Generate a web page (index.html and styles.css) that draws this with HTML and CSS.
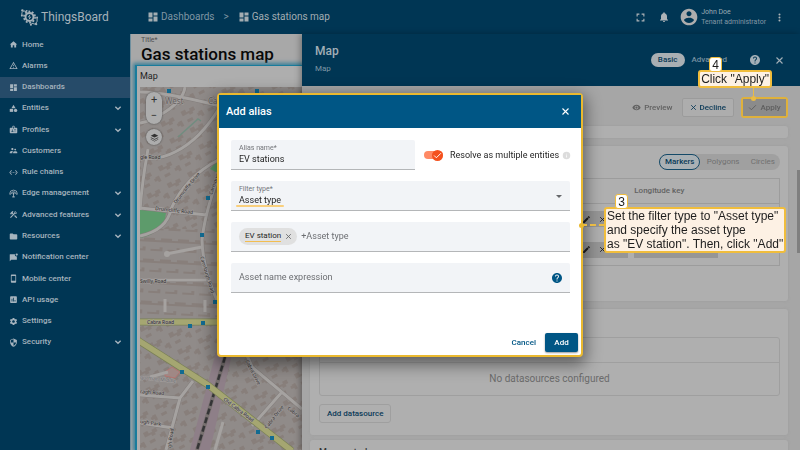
FILE: index.html
```
<!DOCTYPE html>
<html lang="en">
<head>
<meta charset="utf-8">
<title>ThingsBoard - Gas stations map</title>
<link rel="stylesheet" href="styles.css">
</head>
<body>
<svg class="sprite" aria-hidden="true">
  <symbol id="home" viewBox="0 0 24 24"><path d="M10 20v-6h4v6h5v-8h3L12 3 2 12h3v8z"/></symbol>
  <symbol id="alarm" viewBox="0 0 24 24"><path d="M12 2L1 21h22M12 6l7.53 13H4.47M11 10v4h2v-4m-2 6v2h2v-2"/></symbol>
  <symbol id="dash" viewBox="0 0 24 24"><path d="M3 13h8V3H3v10zm0 8h8v-6H3v6zm10 0h8V11h-8v10zm0-18v6h8V3h-8z"/></symbol>
  <symbol id="entities" viewBox="0 0 24 24"><path d="M12 2l-5.5 9h11z"/><circle cx="17.5" cy="17" r="4.5"/><path d="M2 13h9v8H2z"/></symbol>
  <symbol id="profiles" viewBox="0 0 24 24"><path d="M20 7h-5V4c0-1.100-.9-2-2-2h-2c-1.100 0-2 .9-2 2v3H4c-1.100 0-2 .9-2 2v11c0 1.100.9 2 2 2h16c1.100 0 2-.9 2-2V9c0-1.100-.9-2-2-2zM9 12c.83 0 1.500.67 1.500 1.500S9.830 15 9 15s-1.500-.67-1.500-1.500S8.170 12 9 12zm3 6H6v-.75c0-1 2-1.500 3-1.500s3 .5 3 1.500V18zm1-9h-2V4h2v5zm5 7.500h-4V15h4v1.500zm0-3h-4V12h4v1.500z"/></symbol>
  <symbol id="customers" viewBox="0 0 24 24"><path d="M16.500 12c1.380 0 2.490-1.120 2.490-2.500S17.880 7 16.500 7C15.120 7 14 8.120 14 9.500s1.120 2.500 2.500 2.500zM9 11c1.660 0 2.990-1.340 2.990-3S10.660 5 9 5C7.340 5 6 6.340 6 8s1.340 3 3 3zm7.500 3c-1.830 0-5.500.92-5.500 2.750V19h11v-2.250c0-1.830-3.670-2.750-5.500-2.750zM9 13c-2.330 0-7 1.170-7 3.500V19h7v-2.250c0-.85.33-2.340 2.370-3.470C10.500 13.100 9.660 13 9 13z"/></symbol>
  <symbol id="chains" viewBox="0 0 24 24"><path d="M7.770 6.760L6.230 5.480.82 12l5.410 6.520 1.540-1.280L3.420 12l4.350-5.240zM7 13h2v-2H7v2zm10-2h-2v2h2v-2zm-6 2h2v-2h-2v2zm6.770-7.520l-1.540 1.280L20.580 12l-4.350 5.240 1.540 1.280L23.180 12l-5.410-6.520z"/></symbol>
  <symbol id="edge" viewBox="0 0 24 24"><g fill="none" stroke="currentColor" stroke-width="2.200"><path d="M2 12a10 9 0 0 1 20 0M6 13a6 5.500 0 0 1 12 0M12 11v11M8 21h8"/></g><circle cx="12" cy="12" r="2.500"/><circle cx="3" cy="13" r="2"/><circle cx="21" cy="13" r="2"/></symbol>
  <symbol id="tools" viewBox="0 0 24 24"><path d="M13.800 15.700l2.100-2.100 6 6-2.100 2.100zM17.500 10a3.500 3.500 0 0 0 3.200-4.900l-2.700 2.700-1.500-1.500 2.700-2.700A3.500 3.500 0 0 0 14.300 7.900l-1.900 1.800-1.800-1.800.7-.7-1.400-1.400L12 3.700a3 3 0 0 0-4.200 0L4.200 7.200l1.400 1.400H2.800l-.7.7 3.500 3.600.7-.7V9.300l1.400 1.400.7-.7 1.800 1.800-7.400 7.400 2.100 2.100L16.200 9.800c.4.100.8.200 1.300.2z"/></symbol>
  <symbol id="folder" viewBox="0 0 24 24"><path d="M10 4H4c-1.100 0-2 .9-2 2v12c0 1.100.9 2 2 2h16c1.100 0 2-.9 2-2V8c0-1.100-.9-2-2-2h-8l-2-2z"/></symbol>
  <symbol id="notif" viewBox="0 0 24 24"><path d="M3 3h13a5 5 0 0 0 5 6v9H6l-4 4V4z"/><circle cx="20.500" cy="4" r="3"/></symbol>
  <symbol id="mobile" viewBox="0 0 24 24"><path d="M17 1H7c-1.100 0-2 .9-2 2v18c0 1.100.9 2 2 2h10c1.100 0 2-.9 2-2V3c0-1.100-.9-2-2-2zm0 17H7V5h10v13z"/></symbol>
  <symbol id="chart" viewBox="0 0 24 24"><path d="M19 3H5c-1.100 0-2 .9-2 2v14c0 1.100.9 2 2 2h14c1.100 0 2-.9 2-2V5c0-1.100-.9-2-2-2zM9 17H7v-7h2v7zm4 0h-2V7h2v10zm4 0h-2v-4h2v4z"/></symbol>
  <symbol id="gear" viewBox="0 0 24 24"><path d="M19.140 12.940c.04-.3.06-.61.06-.94 0-.32-.02-.64-.07-.94l2.030-1.580c.18-.14.23-.41.12-.61l-1.920-3.320c-.12-.22-.37-.29-.59-.22l-2.390.96c-.5-.38-1.030-.7-1.620-.94l-.36-2.540c-.04-.24-.24-.41-.48-.41h-3.840c-.24 0-.43.17-.47.41l-.36 2.540c-.59.24-1.130.57-1.620.94l-2.390-.96c-.22-.08-.47 0-.59.22L2.740 8.870c-.12.21-.08.47.12.61l2.030 1.580c-.05.3-.09.63-.09.94s.02.64.07.94l-2.030 1.580c-.18.14-.23.41-.12.61l1.920 3.320c.12.22.37.29.59.22l2.390-.96c.5.38 1.030.7 1.620.94l.36 2.540c.05.24.24.41.48.41h3.840c.24 0 .44-.17.47-.41l.36-2.540c.59-.24 1.130-.56 1.620-.94l2.390.96c.22.08.47 0 .59-.22l1.920-3.320c.12-.22.07-.47-.12-.61l-2.010-1.580zM12 15.600c-1.980 0-3.600-1.620-3.600-3.600s1.620-3.600 3.600-3.600 3.600 1.620 3.600 3.600-1.620 3.600-3.600 3.600z"/></symbol>
  <symbol id="shield" viewBox="0 0 24 24"><path d="M12 1L3 5v6c0 5.550 3.840 10.740 9 12 5.160-1.260 9-6.450 9-12V5l-9-4zm0 11h7c-.53 4.120-3.280 7.790-7 8.940V12H5V6.300l7-3.110z"/></symbol>
  <symbol id="chevron" viewBox="0 0 24 24"><path d="M4 8l8 8 8-8" fill="none" stroke="currentColor" stroke-width="4"/></symbol>
  <symbol id="close" viewBox="0 0 24 24"><path d="M4 4l16 16M20 4L4 20" fill="none" stroke="currentColor" stroke-width="3"/></symbol>
  <symbol id="check" viewBox="0 0 24 24"><path d="M3 12l6 6L21 6" fill="none" stroke="currentColor" stroke-width="2.500"/></symbol>
  <symbol id="help" viewBox="0 0 24 24"><path d="M12 2C6.480 2 2 6.480 2 12s4.480 10 10 10 10-4.480 10-10S17.520 2 12 2zm1 17h-2v-2h2v2zm2.070-7.750l-.9.920C13.450 12.900 13 13.500 13 15h-2v-.5c0-1.100.45-2.100 1.170-2.830l1.240-1.260c.37-.36.59-.86.59-1.410 0-1.100-.9-2-2-2s-2 .9-2 2H8c0-2.210 1.790-4 4-4s4 1.790 4 4c0 .88-.36 1.680-.93 2.250z"/></symbol>
  <symbol id="info" viewBox="0 0 24 24"><path d="M12 2a10 10 0 1 0 0 20 10 10 0 0 0 0-20zm1 15h-2v-6h2v6zm0-8h-2V7h2v2z"/></symbol>
  <symbol id="full" viewBox="0 0 24 24"><path d="M3 9V3h6M15 3h6v6M21 15v6h-6M9 21H3v-6" fill="none" stroke="currentColor" stroke-width="3"/></symbol>
  <symbol id="bell" viewBox="0 0 24 24"><path d="M12 22c1.100 0 2-.9 2-2h-4c0 1.100.9 2 2 2zm6-6v-5c0-3.070-1.640-5.640-4.500-6.320V4c0-.83-.67-1.500-1.500-1.500s-1.500.67-1.500 1.500v.68C7.630 5.360 6 7.920 6 11v5l-2 2v1h16v-1l-2-2z"/></symbol>
  <symbol id="account" viewBox="0 0 24 24"><path d="M12 2C6.480 2 2 6.480 2 12s4.480 10 10 10 10-4.480 10-10S17.520 2 12 2zm0 3c1.660 0 3 1.340 3 3s-1.340 3-3 3-3-1.340-3-3 1.340-3 3-3zm0 14.200c-2.500 0-4.710-1.280-6-3.220.03-1.990 4-3.080 6-3.080 1.990 0 5.970 1.090 6 3.080-1.290 1.940-3.500 3.220-6 3.220z"/></symbol>
  <symbol id="dots" viewBox="0 0 24 24"><circle cx="12" cy="4" r="2.700"/><circle cx="12" cy="12" r="2.700"/><circle cx="12" cy="20" r="2.700"/></symbol>
  <symbol id="eye" viewBox="0 0 24 24"><path d="M12 4.500C7 4.500 2.730 7.610 1 12c1.730 4.390 6 7.500 11 7.500s9.270-3.110 11-7.500c-1.730-4.390-6-7.500-11-7.500zM12 17c-2.760 0-5-2.240-5-5s2.240-5 5-5 5 2.240 5 5-2.240 5-5 5zm0-8c-1.660 0-3 1.340-3 3s1.340 3 3 3 3-1.340 3-3-1.340-3-3-3z"/></symbol>
  <symbol id="pencil" viewBox="0 0 24 24"><path d="M3 17.250V21h3.750L17.810 9.940l-3.750-3.750L3 17.250zM20.710 7.040c.39-.39.39-1.020 0-1.410l-2.340-2.340c-.39-.39-1.020-.39-1.410 0l-1.830 1.830 3.750 3.750 1.830-1.830z"/></symbol>
  <symbol id="layers" viewBox="0 0 24 24"><path d="M12 2l10 5-10 5L2 7z"/><path d="M2 11l10 5 10-5v2l-10 5-10-5zM2 16l10 5 10-5v1.500l-10 5-10-5z"/></symbol>
</svg>

<div class="app">
  <header class="topbar">
    <a class="brand" href="#">
      <svg class="logo" viewBox="0 0 20 20" aria-hidden="true">
        <g fill="none" stroke="currentColor">
          <circle cx="10" cy="9.500" r="4.200" stroke-width="2"/>
          <circle cx="10" cy="9.500" r="5.900" stroke-width="1.700" stroke-dasharray="2 1.700"/>
          <path d="M10.500 7L9 9.500h2L9.500 12" stroke-width="1"/>
          <path d="M2 8V5l2-2 3 1M18 10v4l-2 3-4-1" stroke-width="1"/>
        </g>
        <circle cx="2" cy="8" r="1.100"/><circle cx="2.500" cy="2.500" r="1.300"/><circle cx="7" cy="3" r="1"/>
        <circle cx="18" cy="10" r="1"/><circle cx="17" cy="17" r="1.200"/><circle cx="11.500" cy="17.500" r="1.100"/>
      </svg>
      <span>ThingsBoard</span>
    </a>
    <nav class="crumbs" aria-label="Breadcrumb">
      <a href="#"><svg class="icon-l"><use href="#dash"/></svg>Dashboards</a>
      <span class="sep">&gt;</span>
      <a class="current" href="#"><svg class="icon-l"><use href="#dash"/></svg>Gas stations map</a>
    </nav>
    <div class="user">
      <button class="fullscreen" type="button" aria-label="Fullscreen"><svg class="icon"><use href="#full"/></svg></button>
      <button type="button" aria-label="Notifications"><svg class="icon-l"><use href="#bell"/></svg></button>
      <div class="who"><svg class="avatar"><use href="#account"/></svg><div><div class="name">John Doe</div><div>Tenant administrator</div></div></div>
      <button type="button" aria-label="More"><svg class="icon"><use href="#dots"/></svg></button>
    </div>
  </header>

  <nav class="side" aria-label="Main">
    <a href="#"><svg class="icon"><use href="#home"/></svg>Home</a>
    <a href="#"><svg class="icon"><use href="#alarm"/></svg>Alarms</a>
    <a class="active" href="#"><svg class="icon"><use href="#dash"/></svg>Dashboards</a>
    <a href="#"><svg class="icon"><use href="#entities"/></svg>Entities<svg class="chev"><use href="#chevron"/></svg></a>
    <a href="#"><svg class="icon"><use href="#profiles"/></svg>Profiles<svg class="chev"><use href="#chevron"/></svg></a>
    <a href="#"><svg class="icon"><use href="#customers"/></svg>Customers</a>
    <a href="#"><svg class="icon"><use href="#chains"/></svg>Rule chains</a>
    <a href="#"><svg class="icon"><use href="#edge"/></svg>Edge management<svg class="chev"><use href="#chevron"/></svg></a>
    <a href="#"><svg class="icon"><use href="#tools"/></svg>Advanced features<svg class="chev"><use href="#chevron"/></svg></a>
    <a href="#"><svg class="icon"><use href="#folder"/></svg>Resources<svg class="chev"><use href="#chevron"/></svg></a>
    <a href="#"><svg class="icon"><use href="#notif"/></svg>Notification center</a>
    <a href="#"><svg class="icon"><use href="#mobile"/></svg>Mobile center</a>
    <a href="#"><svg class="icon"><use href="#chart"/></svg>API usage</a>
    <a href="#"><svg class="icon"><use href="#gear"/></svg>Settings</a>
    <a href="#"><svg class="icon"><use href="#shield"/></svg>Security<svg class="chev"><use href="#chevron"/></svg></a>
  </nav>

  <main class="dashboard">
    <div class="dash-title">
      <label for="dash-name">Title*</label>
      <input id="dash-name" type="text" value="Gas stations map">
    </div>
    <section class="widget">
      <h2>Map</h2>
      <div class="map">
        <svg class="tiles" viewBox="0 0 162 363" preserveAspectRatio="xMinYMin slice" role="img" aria-label="Street map">
          <defs>
            <pattern id="houses" width="23" height="19" patternUnits="userSpaceOnUse" patternTransform="rotate(-28)">
              <path d="M1 3h5v3h4V4h5v4h-3v2H8V8H1zM17 11h4v6h-3v-2h-3v-3h2zM3 13h6v3H3z" fill="#887f7b"/>
            </pattern>
            <pattern id="terraces" width="17" height="21" patternUnits="userSpaceOnUse" patternTransform="rotate(3)">
              <path d="M0 3h6v2h6V3h5v4H0zM2 14h9v-2h3v4H2z" fill="#887f7b"/>
            </pattern>
          </defs>
          <rect width="162" height="363" fill="#908b89"/>
          <rect width="162" height="142" fill="url(#houses)"/>
          <rect y="142" width="162" height="90" fill="url(#terraces)"/>
          <rect y="232" width="162" height="131" fill="url(#houses)"/>
          <path d="M80 250L50 363h20L96 250z" fill="#8e7f88"/>
          <path d="M0 121l26 5-1 6q-7 16-25 19z" fill="#5d9b6b"/>
          <path d="M78 73l-8 9 8 4z" fill="#5d9b6b"/>
          <path d="M38 50l20-18 3 2" fill="none" stroke="#718d80" stroke-width="1.500"/>
          <path d="M25 285l7-5 8 5-5 6-10-2z" fill="#a08885" stroke="#b27470"/>
          <g fill="none" stroke="#827d7b" stroke-width="4">
            <path d="M0 5q25 0 80 14M45 0q-2 15-25 28-8 6-20 8M0 70q18 4 35-5Q60 53 80 20M8 62Q2 95 0 123M0 121l67 7M80 72Q45 90 31 122 27 143 0 149M80 85Q65 125 62 153q1 35 20 70M0 193h66"/>
            <path d="M94 250q13 15 18 30l50 42M112 339l30-34M0 308l40 3 13-17M40 311L26 363M0 336l33 5"/>
          </g>
          <g fill="none" stroke="#a5a2a0" stroke-width="3">
            <path d="M0 5q25 0 80 14M45 0q-2 15-25 28-8 6-20 8M0 70q18 4 35-5Q60 53 80 20M8 62Q2 95 0 123M0 121l67 7M80 72Q45 90 31 122 27 143 0 149M80 85Q65 125 62 153q1 35 20 70M0 193h66M26 167l36-7M25 225v-13M65 225v-12"/>
            <path d="M94 250q13 15 18 30l50 42M112 339l30-34M0 308l40 3 13-17M40 311L26 363M0 336l33 5M75 363l8-28M10 290l18-5"/>
          </g>
          <circle cx="27" cy="167" r="3" fill="#a5a2a0"/>
          <path d="M85 270L57 363" stroke="#77706f" stroke-width="4"/>
          <path d="M85 270L57 363" stroke="#343436" stroke-width="2.500" stroke-dasharray="6 3"/>
          <g fill="none" stroke="#7b8157" stroke-width="7"><path d="M0 235h80M-4 252l72 46 84 66"/></g>
          <g fill="none" stroke="#a5a671" stroke-width="5.500"><path d="M0 235h80M-4 252l72 46 84 66"/></g>
          <path d="M27 2h4v4h-4zM115 2h4v4h-4zM66 109h4v4h-4zM60 146h4v4h-4zM73 213h4v4h-4zM61 234h4v4h-4zM48 237h4v4h-4zM40 283h4v4h-4zM66 298h4v4h-4zM116 343h4v4h-4zM130 349h4v4h-4z" fill="#126b91"/>
          <g class="streets">
            <text x="25" y="17" class="place">West</text><text x="68" y="17" class="place">Ca</text>
            <text x="0" y="72">gle Road</text>
            <text transform="translate(15 123) rotate(6)">Drumcliffe Road</text>
            <text transform="translate(36 117) rotate(-51)">Drumcliffe Drive</text>
            <text transform="translate(72 108) rotate(-70)">Carnlough</text>
            <text transform="translate(60 170) rotate(73)">Carnlough Road</text>
            <text x="0" y="196">Swilly Road</text>
            <text x="7" y="237">Cabra Road</text>
            <text transform="translate(83 313) rotate(37)">Old Cabra Road</text>
            <text transform="translate(105 274) rotate(62)">Cabra Drive</text>
            <text transform="translate(127 342) rotate(-52)">Cabra Drive</text>
            <text transform="translate(147 322) rotate(40)">Cabra</text>
            <text transform="translate(0 306) rotate(5)">ragh Road</text>
            <text transform="translate(0 336) rotate(8)">ugh Park</text>
            <text transform="translate(31 361) rotate(-82)">gh Road</text>
            <text transform="translate(0 292) rotate(6)" class="soft">gorman Middle</text>
          </g>
        </svg>
        <div class="map-tools">
          <div class="zoomer"><button type="button" aria-label="Zoom in">+</button><button type="button" aria-label="Zoom out">−</button></div>
          <button class="layer-btn" type="button" aria-label="Layers"><svg class="icon"><use href="#layers"/></svg></button>
        </div>
      </div>
    </section>
  </main>

  <aside class="panel">
    <header class="panel-head">
      <div><h2>Map</h2><p>Map</p></div>
      <div class="modes">
        <button class="mode on" type="button">Basic</button>
        <button class="mode" type="button">Advanced</button>
        <button type="button" aria-label="Help"><svg class="help-l"><use href="#help"/></svg></button>
        <button type="button" aria-label="Close panel"><svg class="icon"><use href="#close"/></svg></button>
      </div>
    </header>
    <div class="panel-body">
      <div class="actions">
        <button class="preview" type="button"><svg class="icon"><use href="#eye"/></svg>Preview</button>
        <button class="decline" type="button"><svg class="icon-s"><use href="#close"/></svg>Decline</button>
        <div class="apply-wrap">
          <button class="apply" type="button"><svg class="icon"><use href="#check"/></svg>Apply</button>
          <div class="callout four"><span class="num">4</span>Click "Apply"</div>
          <i class="stem"></i>
        </div>
      </div>
      <section class="card first"></section>
      <section class="card overlays">
        <div class="tabs">
          <button class="on" type="button">Markers</button><button type="button">Polygons</button><button type="button">Circles</button>
        </div>
        <table>
          <thead><tr><th class="c-lat"></th><th class="c-lon">Longitude key</th><th></th></tr></thead>
          <tbody>
            <tr><td><span class="keys"><svg class="icon"><use href="#pencil"/></svg><svg class="icon-s"><use href="#close"/></svg></span></td><td><span class="keys"></span></td><td></td></tr>
            <tr><td><span class="keys"><svg class="icon"><use href="#pencil"/></svg><svg class="icon-s"><use href="#close"/></svg></span></td><td><span class="keys"></span></td><td><span class="row-tools"><svg class="icon"><use href="#gear"/></svg><svg class="icon"><use href="#folder"/></svg></span></td></tr>
          </tbody>
        </table>
      </section>
      <section class="card sources">
        <div class="empty"><div class="empty-head"></div><p>No datasources configured</p></div>
        <button class="add-source" type="button">Add datasource</button>
      </section>
      <section class="card last"><h3>Map controls</h3></section>
      <i class="thumb"></i>
    </div>
  </aside>
</div>

<div class="overlay">
  <div class="modal" role="dialog" aria-labelledby="modal-title">
    <header class="modal-head">
      <h1 id="modal-title">Add alias</h1>
      <button type="button" aria-label="Close"><svg class="icon"><use href="#close"/></svg></button>
    </header>
    <form class="form">
      <div class="row">
        <div class="field"><label for="alias">Alias name*</label><input id="alias" type="text" value="EV stations"></div>
        <label class="switch"><input type="checkbox" checked><span class="track"><span class="knob"><svg viewBox="0 0 24 24"><use href="#check"/></svg></span></span>Resolve as multiple entities</label>
        <svg class="info"><use href="#info"/></svg>
      </div>
      <div class="field"><label for="filter">Filter type*</label><select id="filter"><option>Asset type</option></select><i class="mark"></i></div>
      <div class="field inline">
        <span class="chip"><span>EV station</span><button type="button" aria-label="Remove EV station"><svg><use href="#close"/></svg></button></span>
        <input type="text" placeholder="+Asset type" aria-label="Asset type">
      </div>
      <div class="field inline"><input type="text" placeholder="Asset name expression" aria-label="Asset name expression"><svg class="help-l"><use href="#help"/></svg></div>
    </form>
    <footer class="modal-foot"><button class="cancel" type="button">Cancel</button><button class="add" type="button">Add</button></footer>
    <i class="link"></i>
    <div class="callout three"><span class="num">3</span>Set the filter type to "Asset type"<br>and specify the asset type<br>as "EV station". Then, click "Add"</div>
  </div>
</div>
</body>
</html>
```
FILE: styles.css
```
* { box-sizing: border-box; }
body, h1, h2, h3, p { margin: 0; }
body {
  font: 8px/10px Roboto, "Liberation Sans", sans-serif;
  color: #1f1f1f;
  background: #003654;
  height: 100vh;
  overflow: hidden;
}
button, input, select { font: inherit; color: inherit; background: none; border: 0; padding: 0; margin: 0; outline: 0; }
button { display: inline-flex; align-items: center; justify-content: center; }
a { color: inherit; text-decoration: none; }
svg { fill: currentColor; flex: none; display: block; }
.sprite { position: absolute; width: 0; height: 0; }
.icon { width: 9px; height: 9px; }
.icon-s { width: 7px; height: 7px; }
.icon-l { width: 12px; height: 12px; }

.app {
  display: grid;
  grid-template: 34px minmax(0, 1fr) / 130px minmax(0, 172fr) minmax(0, 498fr);
  height: 100vh;
}

/* Top bar */
.topbar { grid-column: 1 / -1; display: flex; align-items: center; color: #a6b2ba; }
.brand { width: 147px; padding-left: 20px; display: flex; align-items: center; gap: 2px; font-size: 12px; line-height: 16px; }
.logo { width: 19px; height: 19px; }
.crumbs { display: flex; align-items: center; gap: 9px; font-size: 10px; line-height: 12px; color: #7f95a3; }
.crumbs a { display: flex; align-items: center; gap: 2px; }
.crumbs svg, .crumbs .current { color: #a3adb2; }
.user { margin-left: auto; display: flex; align-items: center; gap: 9px; padding-right: 16px; color: #adb3b7; }
.fullscreen { margin-right: 4px; }
.who { display: flex; align-items: center; gap: 2px; font-size: 7px; color: #8297a5; }
.name { color: #9babb5; }
.avatar { width: 20px; height: 20px; color: #adadad; }

/* Side menu */
.side { display: grid; grid-auto-rows: 1fr; height: 319px; color: #a6b4be; font-weight: 500; }
.side a { display: flex; align-items: center; gap: 4px; padding: 0 8px 0 9px; }
.side .active { background: #264b69; }
.chev { width: 8px; height: 8px; margin-left: auto; }

/* Dashboard */
.dashboard { background: #a8a8a8; display: flex; flex-direction: column; min-height: 0; border-left: 1px solid #6f8f9e; overflow: hidden; }
.dash-title { height: 31px; padding: 2px 0 0 10px; }
.dash-title label { display: block; font-size: 7px; line-height: 8px; color: #4e4e4e; }
.dash-title input { display: block; width: 100%; font-size: 17px; line-height: 20px; height: 20px; font-weight: 500; color: #080808; }
.widget { flex: 1; min-height: 0; margin-left: 4px; border: solid #197c9c; border-width: 1px 0 0 2px; padding-left: 3px; background: #aeaeae; display: flex; flex-direction: column; box-shadow: 0 0 4px 2px #397f98; }
.widget h2 { font-size: 9px; line-height: 21px; font-weight: 400; }
.map { flex: 1; min-height: 0; position: relative; overflow: hidden; }
.tiles { width: 100%; height: 100%; }
.streets { font: 5px "Noto Sans", sans-serif; fill: #2c2a2a; stroke: #a5a1a0; stroke-width: 1px; paint-order: stroke; }
.streets .place { font-size: 8px; fill: #656161; }
.streets .soft { fill: #6d6d70; }
.map-tools { position: absolute; left: 6px; top: 5px; display: grid; justify-items: center; gap: 5px; color: #333; }
.zoomer { display: grid; width: 16px; height: 32px; border-radius: 8px; background: #adadad; box-shadow: 0 0 2px #444; font-size: 11px; }
.layer-btn { width: 16px; height: 16px; border-radius: 8px; background: #adadad; box-shadow: 0 0 2px #444; }

/* Widget settings */
.panel { background: #a6a6a6; min-width: 0; min-height: 0; overflow: hidden; display: flex; flex-direction: column; box-shadow: -2px 0 6px rgba(0, 0, 0, .3); position: relative; }
.panel-head { height: 52px; flex: none; background: #003654; color: #a2afb7; display: flex; align-items: center; justify-content: space-between; padding: 0 16px 0 13px; }
.panel-head h2 { font-size: 12px; line-height: 18px; font-weight: 500; }
.panel-head p { font-size: 8px; line-height: 18px; color: #7f96a4; }
.modes { display: flex; align-items: center; }
.mode { height: 14px; padding: 0 7px; color: #7690a0; font-weight: 500; }
.mode.on { background: #a9afb3; color: #083855; border-radius: 7px; }
.help-l { width: 12px; height: 12px; }
.modes .help-l { margin: 0 14px 0 15px; }
.panel-body { flex: 1; min-height: 0; position: relative; padding: 11px 12px 0 8px; display: flex; flex-direction: column; gap: 8px; }
.panel-body > * { flex: none; }
.actions { display: flex; justify-content: flex-end; align-items: center; gap: 7px; height: 21px; font-weight: 500; position: relative; z-index: 1; }
.actions button { height: 19px; gap: 3px; border-radius: 2px; }
.preview { color: #616161; padding: 0 2px; }
.decline { color: #0b3a58; border: 1px solid #9b9b9b; background: #adadad; padding: 0 7px; }
.apply-wrap { position: relative; border: 2px solid #dfb13c; border-radius: 3px; }
.actions .apply { height: 17px; width: 43px; background: #8b8b8b; color: #5e5e5e; border-radius: 0; }
.card { background: #afafaf; border-radius: 3px; box-shadow: 0 0 3px #9d9d9d; }
.first { height: 12px; }
.overlays { height: 155px; padding: 8px 8px 0 9px; }
.tabs { width: 121px; margin-left: auto; display: flex; justify-content: space-between; height: 16px; border-radius: 8px; background: #a0a0a0; color: #707070; }
.tabs button { padding: 0 5px; border-radius: 8px; }
.tabs .on { border: 1px solid #154a68; color: #0b3b58; background: #a9b0b4; font-weight: 500; }
table { width: 100%; margin-top: 8px; border-collapse: collapse; table-layout: fixed; border: 1px solid #9c9c9c; }
thead tr { height: 25px; }
tbody tr { height: 31px; }
th { font-weight: 500; text-align: left; color: #626262; padding: 0 0 0 2px; border-bottom: 1px solid #9c9c9c; }
th:last-child { width: 58px; }
.c-lat { width: 68%; }
td { padding: 0 4px 0 2px; }
.keys { display: flex; align-items: center; justify-content: flex-end; gap: 8px; height: 16px; padding-right: 22px; background: #969696; }
.row-tools { display: flex; gap: 12px; padding-left: 16px; }
.sources { height: 126px; padding: 28px 8px 0 9px; }
.empty { border: 1px solid #9f9f9f; border-radius: 3px; height: 59px; }
.empty-head { height: 25px; border-bottom: 1px solid #9f9f9f; }
.empty p { text-align: center; font-size: 10px; line-height: 32px; color: #6b6b6b; }
.add-source { height: 19px; margin-top: 8px; padding: 0 7px; border: 1px solid #9f9f9f; border-radius: 3px; color: #0b3a58; font-weight: 500; }
.last { height: 60px; margin-top: -3px; padding: 6px 9px; }
.last h3 { font-size: 9px; line-height: 12px; font-weight: 500; color: #333; }
.thumb { position: absolute; right: 0; top: 84px; width: 3px; height: 83px; background: #7f7f7f; }

/* Dialog */
.overlay { position: fixed; inset: 0; display: grid; place-items: center; pointer-events: none; }
.modal { pointer-events: auto; position: relative; width: 366px; height: 264px; background: #fff; border: 2px solid #eab92f; border-radius: 4px; display: flex; flex-direction: column; box-shadow: 0 5px 16px 3px rgba(0, 0, 0, .45); }
.modal-head { height: 33px; background: #005685; color: #fff; display: flex; align-items: center; justify-content: space-between; padding: 0 11px 0 7px; }
.modal-head h1 { font-size: 11px; line-height: 16px; font-weight: 500; }
.form { padding: 12px 11px 0 12px; display: flex; flex-direction: column; gap: 11px; font-size: 9px; }
.row { display: flex; align-items: center; }
.row .field { flex: 0 0 184px; }
.field { height: 30px; background: #f2f4f7; border-bottom: 1px solid #b4b6b8; border-radius: 2px 2px 0 0; padding: 4px 8px 0; position: relative; }
.field label { display: block; font-size: 7px; line-height: 9px; color: #74767a; }
.field input, .field select { display: block; width: 100%; height: 13px; line-height: 13px; }
.field select { appearance: none; }
.field:has(select)::after { content: ""; position: absolute; right: 8px; top: 14px; border: solid transparent; border-width: 3px 3px 0; border-top-color: #65676a; }
.mark { position: absolute; left: 5px; top: 24px; width: 48px; height: 2px; border-radius: 1px; background: #f9cf7c; }
.inline { display: flex; align-items: center; gap: 4px; padding: 0 7px 0 8px; }
.inline input { flex: 1; width: auto; min-width: 0; }
.inline input::placeholder { color: #6c6e72; opacity: 1; }
.inline .help-l { color: #005685; }
.chip { height: 17px; border-radius: 9px; background: #e0e0e0; padding: 0 5px 0 6px; display: flex; align-items: center; gap: 4px; font-size: 8px; }
.chip > span { border-bottom: 1px solid #f2bd50; }
.chip svg { width: 7px; height: 7px; color: #66686a; }
.switch { display: flex; align-items: center; gap: 7px; margin-left: 9px; white-space: nowrap; }
.switch input { position: absolute; opacity: 0; width: 19px; height: 11px; }
.track { width: 19px; height: 8px; border-radius: 4px; background: #ff8a65; display: flex; align-items: center; justify-content: flex-end; }
.knob { width: 11px; height: 11px; border-radius: 6px; background: #f4511e; color: #fff; display: grid; place-items: center; }
.knob svg { width: 9px; height: 9px; }
.info { width: 9px; height: 9px; color: #dcdcdc; margin-left: 3px; }
.modal-foot { margin-top: auto; padding: 0 3px 3px; display: flex; justify-content: flex-end; gap: 9px; font-weight: 500; color: #005685; }
.add { width: 33px; height: 19px; border-radius: 2px; background: #005685; color: #fff; box-shadow: 0 1px 2px rgba(0, 0, 0, .4); }

/* Tutorial callouts */
.callout { position: absolute; background: #fdf1e4; border: 2px solid #f0bd3c; border-radius: 3px; font: 12px/14px "Liberation Sans", Arial, sans-serif; color: #1d1d1d; white-space: nowrap; padding: 0 1px; }
.num { position: absolute; bottom: 100%; left: 9px; width: 13px; height: 15px; background: #fff; border: 1px solid #f0bd3c; border-radius: 3px; text-align: center; }
.three { left: calc(100% + 23px); top: 112px; }
.four { right: 14px; bottom: 28px; }
.link { position: absolute; left: 100%; top: 129px; width: 24px; border-top: 2px dashed #e9bb46; }
.link::before { content: ""; position: absolute; left: -2px; top: -3px; width: 5px; height: 5px; border-radius: 3px; background: #eab92f; }
.stem { position: absolute; left: 10px; top: -11px; width: 1px; height: 11px; background: #e9bb46; }
.stem::after { content: ""; position: absolute; left: -2px; bottom: -2px; width: 5px; height: 5px; border-radius: 3px; background: #e9bb46; }
```
